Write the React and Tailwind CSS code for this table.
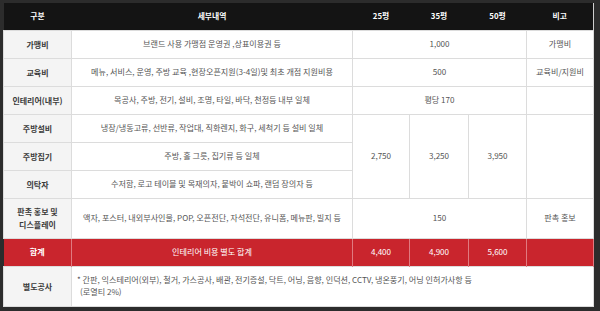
import React from "react";

const font = { fontFamily: '"Noto Sans CJK KR", "Noto Sans", sans-serif' };

export default function App() {
  const th = "text-white font-bold text-[7.8px] text-center align-middle";
  const lab = "bg-[#f4f4f4] text-[#3a3a3a] font-bold text-[8px] text-center align-middle border border-[#dcdcdc] leading-[13px]";
  const td = "bg-white text-[#555] text-[8.1px] text-center align-middle border border-[#dcdcdc]";
  const red = "bg-[#c9252d] text-white text-[8.1px] text-center align-middle border-x border-[#e07a80]";
  return (
    <div className="w-[600px] h-[311px] bg-[#2c2c2c] pt-[3px] pl-[3px] overflow-hidden" style={font}>
      <table className="table-fixed border-collapse w-[590px] border-r border-b border-[#cfcfcf]">
        <colgroup>
          <col className="w-[68px]" />
          <col className="w-[281px]" />
          <col className="w-[57px]" />
          <col className="w-[59px]" />
          <col className="w-[58px]" />
          <col className="w-[67px]" />
        </colgroup>
        <tbody>
          <tr className="h-[27px] bg-[#141414]">
            <td className={th}>구분</td>
            <td className={th}>세부내역</td>
            <td className={th}>25평</td>
            <td className={th}>35평</td>
            <td className={th}>50평</td>
            <td className={th}>비고</td>
          </tr>
          <tr className="h-[28px]">
            <td className={lab}>가맹비</td>
            <td className={td}>브랜드 사용 가맹점 운영권 ,상표이용권 등</td>
            <td className={td} colSpan={3}>1,000</td>
            <td className={td}>가맹비</td>
          </tr>
          <tr className="h-[28px]">
            <td className={lab}>교육비</td>
            <td className={td}>메뉴, 서비스, 운영, 주방 교육 ,현장오픈지원(3-4일)및 최초 개점 지원비용</td>
            <td className={td} colSpan={3}>500</td>
            <td className={td}>교육비/지원비</td>
          </tr>
          <tr className="h-[28px]">
            <td className={lab}>인테리어(내부)</td>
            <td className={td}>목공사, 주방, 전기, 설비, 조명, 타일, 바닥, 천정등 내부 일체</td>
            <td className={td} colSpan={3}>평당 170</td>
            <td className={td}></td>
          </tr>
          <tr className="h-[28px]">
            <td className={lab}>주방설비</td>
            <td className={td}>냉장/냉동고류, 선반류, 작업대, 직화렌지, 화구, 세척기 등 설비 일체</td>
            <td className={td} rowSpan={3}>2,750</td>
            <td className={td} rowSpan={3}>3,250</td>
            <td className={td} rowSpan={3}>3,950</td>
            <td className={td} rowSpan={3}></td>
          </tr>
          <tr className="h-[28px]">
            <td className={lab}>주방집기</td>
            <td className={td}>주방, 홀 그릇, 집기류 등 일체</td>
          </tr>
          <tr className="h-[28px]">
            <td className={lab}>의탁자</td>
            <td className={td}>수저함, 로고 테이블 및 목재의자, 붙박이 쇼파, 랜덤 장의자 등</td>
          </tr>
          <tr className="h-[40px]">
            <td className={lab}>판촉 홍보 및<br />디스플레이</td>
            <td className={td}>액자, 포스터, 내외부사인물, POP, 오픈전단, 자석전단, 유니폼, 메뉴판, 빌지 등</td>
            <td className={td} colSpan={3}>150</td>
            <td className={td}>판촉 홍보</td>
          </tr>
          <tr className="h-[28px]">
            <td className={`${red} font-bold border-l-0`}>합계</td>
            <td className={red}>인테리어 비용 별도 합계</td>
            <td className={red}>4,400</td>
            <td className={red}>4,900</td>
            <td className={red}>5,600</td>
            <td className={red}></td>
          </tr>
          <tr className="h-[40px]">
            <td className={lab}>별도공사</td>
            <td className="bg-white text-[#555] text-[8.1px] text-left align-middle border border-[#dcdcdc] pl-[5px] leading-[12.5px]" colSpan={5}>
              * 간판, 익스테리어(외부), 철거, 가스공사, 배관, 전기증설, 닥트, 어닝, 음향, 인덕션, CCTV, 냉온풍기, 어닝 인허가사항 등
              <br />
              <span className="pl-[3px]">(로열티 2%)</span>
            </td>
          </tr>
        </tbody>
      </table>
    </div>
  );
}
